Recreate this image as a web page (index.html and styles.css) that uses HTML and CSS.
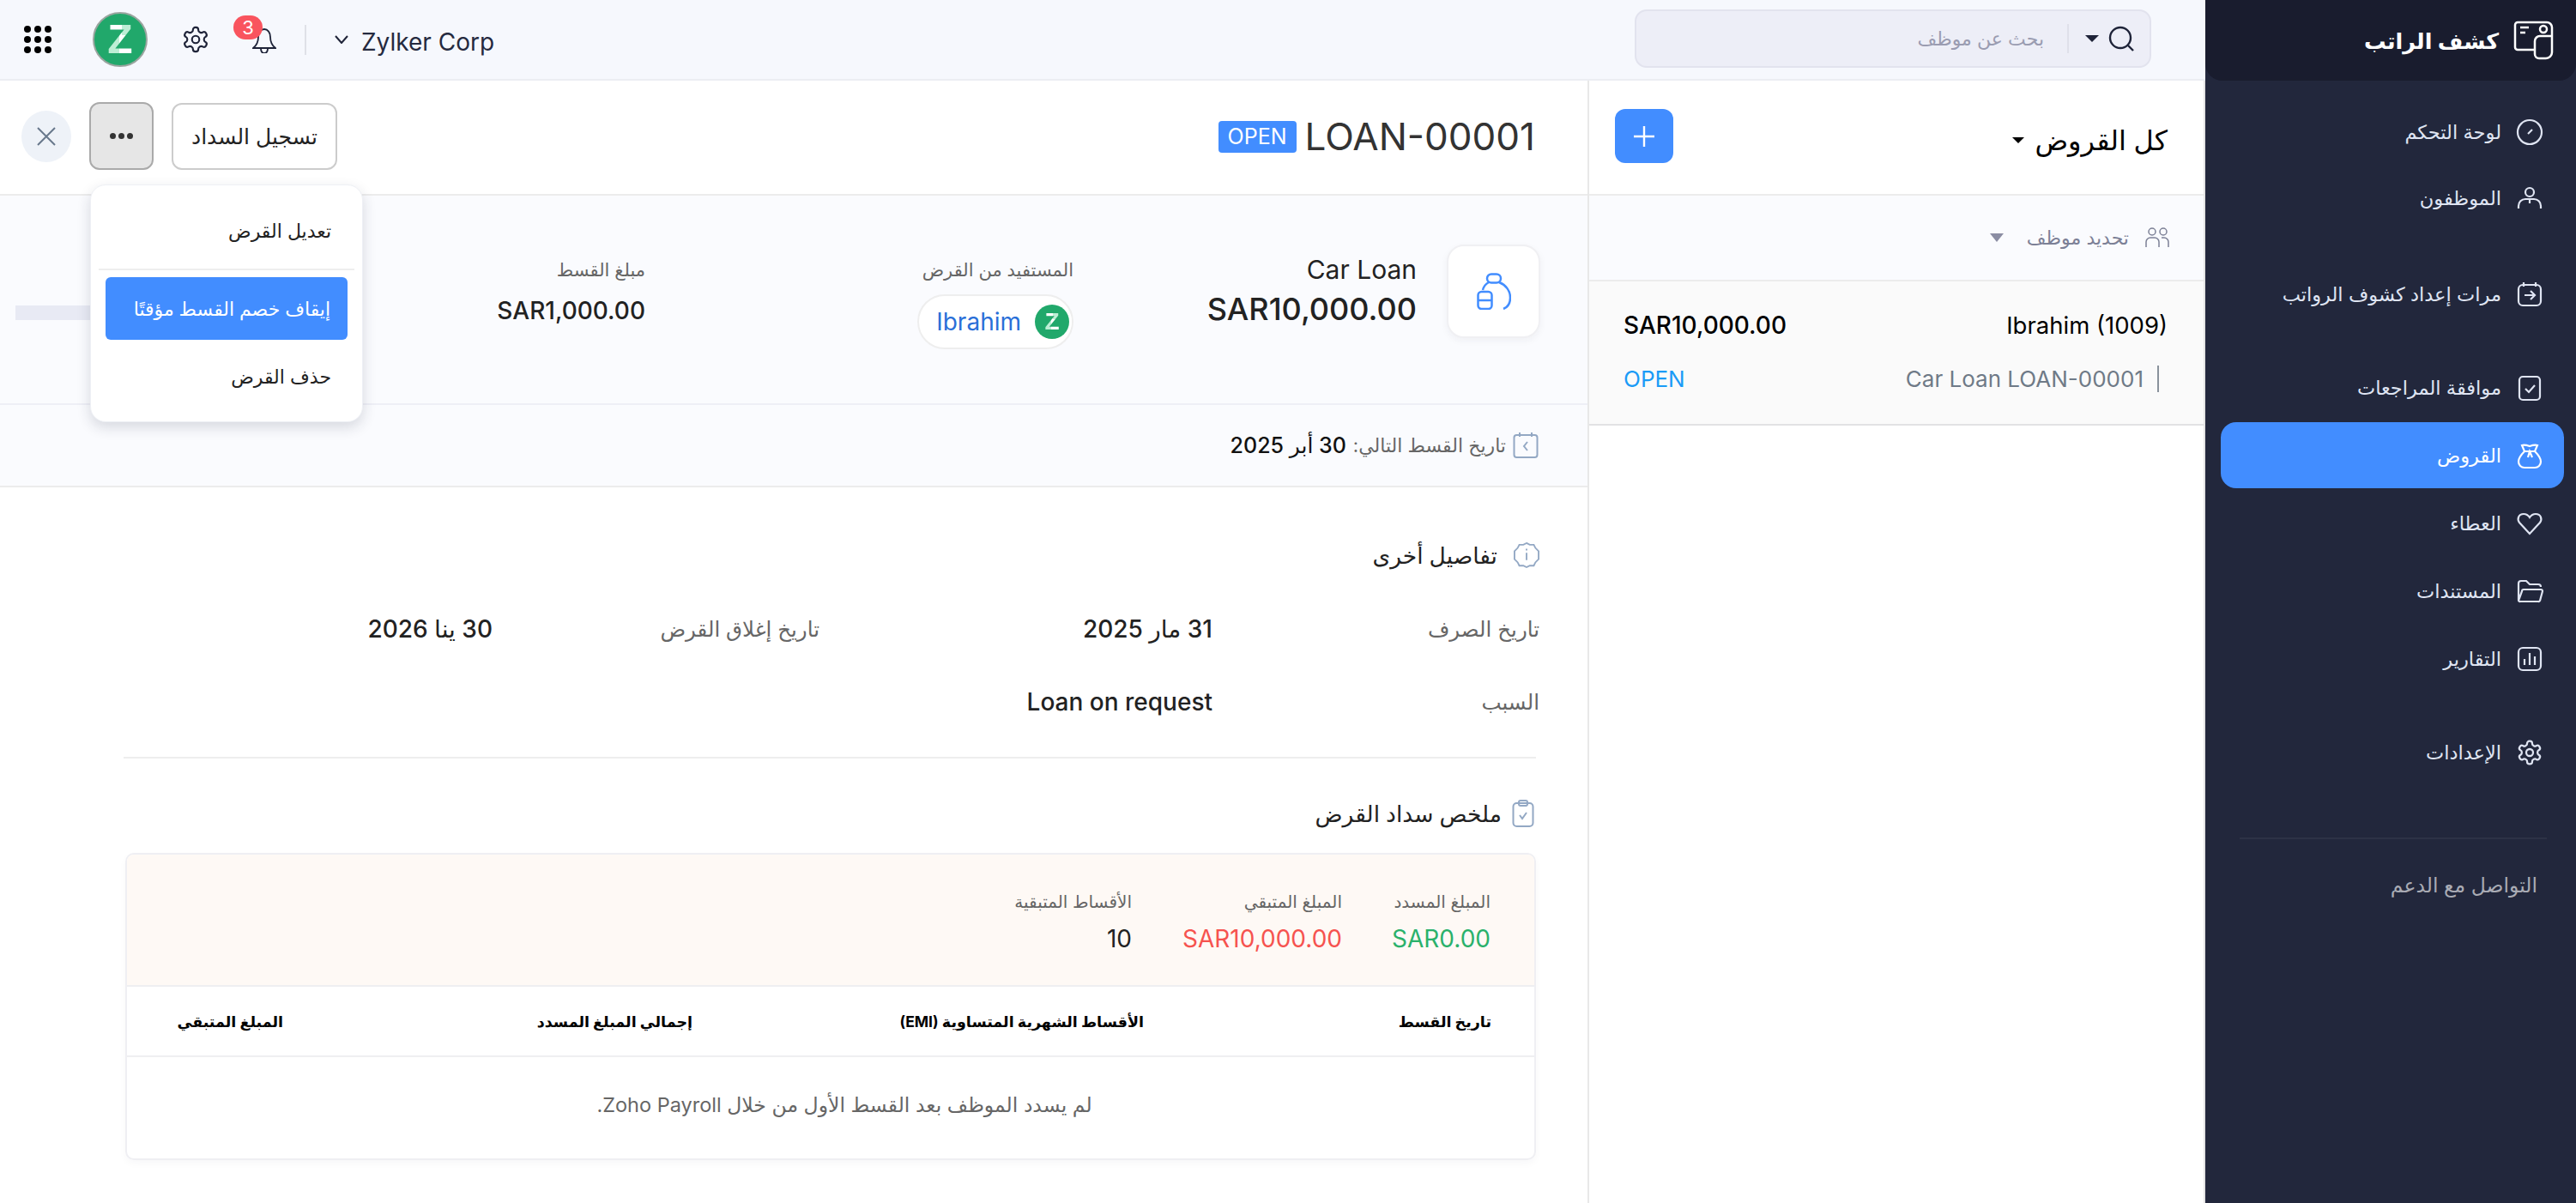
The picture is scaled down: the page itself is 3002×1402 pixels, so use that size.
FILE: index.html
```html
<!DOCTYPE html>
<html lang="ar" dir="rtl">
<head>
<meta charset="utf-8">
<title>كشف الراتب</title>
<link rel="stylesheet" href="styles.css">
</head>
<body>
<div class="app">
  <aside class="sidebar">
    <div class="brand">
      <svg class="brand-icon" viewBox="0 0 48 48"><path d="M25 35H6a3 3 0 0 1-3-3V6a3 3 0 0 1 3-3h34a6 6 0 0 1 6 6v29a7 7 0 0 1-7 7h-8a5 5 0 0 1-5-5V25a6 6 0 0 1 6-6h14"/><circle cx="36" cy="11" r="4"/><path d="M9 9h10M9 15h6"/></svg>
      <span class="brand-name">كشف الراتب</span>
    </div>
    <nav class="nav">
      <div class="nav-group">
        <a class="nav-item"><svg class="nav-icon" viewBox="0 0 32 32"><circle cx="16" cy="16" r="14"/><path d="M14 18l5-5"/></svg><span>لوحة التحكم</span></a>
        <a class="nav-item"><svg class="nav-icon" viewBox="0 0 32 32"><circle cx="16" cy="9" r="5"/><path d="M3 28v-3a8 8 0 0 1 8-8h10a8 8 0 0 1 8 8v3M16 17v5"/></svg><span>الموظفون</span></a>
      </div>
      <div class="nav-group nav-group-gap35">
        <a class="nav-item"><svg class="nav-icon" viewBox="0 0 32 32"><rect x="3" y="5" width="26" height="24" rx="5"/><path d="M9 2v5M23 2v5M10 17h12M17 12l5 5-5 5"/></svg><span>مرات إعداد كشوف الرواتب</span></a>
      </div>
      <div class="nav-group nav-group-gap32 nav-group-tight">
        <a class="nav-item"><svg class="nav-icon" viewBox="0 0 32 32"><rect x="4" y="3" width="24" height="27" rx="4"/><path d="M11 17l4 4 7-8"/></svg><span>موافقة المراجعات</span></a>
        <a class="nav-item nav-item-active"><svg class="nav-icon" viewBox="0 0 32 32"><path d="M10 11C6 15 3 19 3 23c0 4 3 7 7 7h12c4 0 7-3 7-7 0-4-3-8-7-12M10 11L7 4c3-1 6 0 9 1 3-1 6-2 9-1l-3 7zM14 18l2-7 3 7"/></svg><span>القروض</span></a>
        <a class="nav-item"><svg class="nav-icon" viewBox="0 0 32 32"><path d="M16 28L4 15C1 11 3 5 9 5c3 0 5 1 7 4 2-3 4-4 7-4 6 0 8 6 5 10z"/></svg><span>العطاء</span></a>
        <a class="nav-item"><svg class="nav-icon" viewBox="0 0 32 32"><path d="M3 26V7a3 3 0 0 1 3-3h6l4 4h10a3 3 0 0 1 3 3M3 27a2 2 0 0 0 2 1h21a2 2 0 0 0 2-1l3-11a2 2 0 0 0-2-2H9a2 2 0 0 0-2 2L3 27z"/></svg><span>المستندات</span></a>
        <a class="nav-item"><svg class="nav-icon" viewBox="0 0 32 32"><rect x="3" y="3" width="26" height="26" rx="5"/><path d="M10 23v-7M16 23V9M22 23V13"/></svg><span>التقارير</span></a>
      </div>
      <div class="nav-group nav-group-gap32">
        <a class="nav-item"><svg class="nav-icon" viewBox="0 0 24 24"><path class="thin" d="M12.22 2h-.44a2 2 0 0 0-2 2v.18a2 2 0 0 1-1 1.73l-.43.25a2 2 0 0 1-2 0l-.15-.08a2 2 0 0 0-2.73.73l-.22.38a2 2 0 0 0 .73 2.73l.15.1a2 2 0 0 1 1 1.72v.51a2 2 0 0 1-1 1.74l-.15.09a2 2 0 0 0-.73 2.73l.22.38a2 2 0 0 0 2.73.73l.15-.08a2 2 0 0 1 2 0l.43.25a2 2 0 0 1 1 1.73V20a2 2 0 0 0 2 2h.44a2 2 0 0 0 2-2v-.18a2 2 0 0 1 1-1.73l.43-.25a2 2 0 0 1 2 0l.15.08a2 2 0 0 0 2.73-.73l.22-.39a2 2 0 0 0-.73-2.73l-.15-.08a2 2 0 0 1-1-1.74v-.5a2 2 0 0 1 1-1.74l.15-.09a2 2 0 0 0 .73-2.73l-.22-.38a2 2 0 0 0-2.73-.73l-.15.08a2 2 0 0 1-2 0l-.43-.25a2 2 0 0 1-1-1.73V4a2 2 0 0 0-2-2z"/><circle class="thin" cx="12" cy="12" r="3"/></svg><span>الإعدادات</span></a>
      </div>
      <div class="nav-sep"></div>
      <a class="nav-support">التواصل مع الدعم</a>
    </nav>
  </aside>

  <div class="main">
    <header class="topbar">
      <div class="search">
        <svg class="search-icon" viewBox="0 0 30 30"><circle cx="14" cy="14" r="12"/><path d="M23 23l6 6"/></svg>
        <span class="caret caret-dark"></span>
        <span class="search-sep"></span>
        <span class="search-text">بحث عن موظف</span>
      </div>
      <div class="top-tools">
        <span class="org">Zylker Corp</span>
        <svg class="org-chev" viewBox="0 0 16 10"><path d="M1 1l7 8 7-8"/></svg>
        <span class="top-sep"></span>
        <div class="bell">
          <svg viewBox="0 0 28 32"><path d="M1 26c4-3 6-6 6-13 0-5 3-9 7-9s7 4 7 9c0 7 2 10 6 13zM10 26c0 8 8 8 8 0"/></svg>
          <b class="badge">3</b>
        </div>
        <svg class="gear" viewBox="0 0 24 24"><path d="M12.22 2h-.44a2 2 0 0 0-2 2v.18a2 2 0 0 1-1 1.73l-.43.25a2 2 0 0 1-2 0l-.15-.08a2 2 0 0 0-2.73.73l-.22.38a2 2 0 0 0 .73 2.73l.15.1a2 2 0 0 1 1 1.72v.51a2 2 0 0 1-1 1.74l-.15.09a2 2 0 0 0-.73 2.73l.22.38a2 2 0 0 0 2.73.73l.15-.08a2 2 0 0 1 2 0l.43.25a2 2 0 0 1 1 1.73V20a2 2 0 0 0 2 2h.44a2 2 0 0 0 2-2v-.18a2 2 0 0 1 1-1.73l.43-.25a2 2 0 0 1 2 0l.15.08a2 2 0 0 0 2.73-.73l.22-.39a2 2 0 0 0-.73-2.73l-.15-.08a2 2 0 0 1-1-1.74v-.5a2 2 0 0 1 1-1.74l.15-.09a2 2 0 0 0 .73-2.73l-.22-.38a2 2 0 0 0-2.73-.73l-.15.08a2 2 0 0 1-2 0l-.43-.25a2 2 0 0 1-1-1.73V4a2 2 0 0 0-2-2z"/><circle cx="12" cy="12" r="3"/></svg>
        <span class="zavatar zavatar-lg"><span class="zletter">Z</span></span>
        <svg class="apps" viewBox="0 0 32 32"><circle cx="4" cy="4" r="4"/><circle cx="16" cy="4" r="4"/><circle cx="28" cy="4" r="4"/><circle cx="4" cy="16" r="4"/><circle cx="16" cy="16" r="4"/><circle cx="28" cy="16" r="4"/><circle cx="4" cy="28" r="4"/><circle cx="16" cy="28" r="4"/><circle cx="28" cy="28" r="4"/></svg>
      </div>
    </header>

    <div class="content">
      <section class="list">
        <div class="list-head">
          <div class="list-title"><h2>كل القروض</h2><span class="caret caret-black"></span></div>
          <button class="add"><svg viewBox="0 0 24 24"><path d="M12 0v24M0 12h24"/></svg></button>
        </div>
        <div class="list-filter">
          <svg class="people" viewBox="0 0 28 24"><circle cx="8" cy="5" r="4"/><circle cx="21" cy="5" r="4"/><path d="M1 23v-6a5 5 0 0 1 5-5h5a5 5 0 0 1 5 5v6M19 12h3a5 5 0 0 1 5 5v6"/></svg>
          <span>تحديد موظف</span>
          <span class="caret caret-gray"></span>
        </div>
        <article class="loan-row">
          <div class="loan-line">
            <span class="loan-name">Ibrahim (1009)</span>
            <span class="loan-amount">SAR10,000.00</span>
          </div>
          <div class="loan-line loan-line-sub">
            <span class="loan-meta"><i class="pipe"></i><bdi>Car Loan LOAN-00001</bdi></span>
            <span class="loan-status">OPEN</span>
          </div>
        </article>
      </section>

      <section class="detail">
        <div class="detail-head">
          <div class="detail-title"><h1>LOAN-00001</h1><span class="tag">OPEN</span></div>
          <div class="actions">
            <button class="btn">تسجيل السداد</button>
            <button class="btn-more"><i></i><i></i><i></i></button>
            <button class="btn-close"><svg viewBox="0 0 22 22"><path d="M1 1l20 20M21 1L1 21"/></svg></button>
          </div>
          <div class="menu">
            <div class="menu-item">تعديل القرض</div>
            <div class="menu-sep"></div>
            <div class="menu-item menu-item-active">إيقاف خصم القسط مؤقتًا</div>
            <div class="menu-item">حذف القرض</div>
          </div>
        </div>

        <div class="overview">
          <div class="ov-cell ov-main">
            <div class="ov-icon"><svg viewBox="0 0 40 43"><rect x="12" y="1.500" width="16" height="10" rx="5"/><path d="M14 11c-4 2-6 5-7 9M26 11c8 3 13 10 13 18 0 6-3 11-8 13"/><rect x="1.500" y="22" width="16" height="20" rx="4"/><path d="M1.500 32h16"/></svg></div>
            <div class="ov-name"><div class="ov-type">Car Loan</div><div class="ov-value ov-value-lg">SAR10,000.00</div></div>
          </div>
          <div class="ov-cell ov-stack">
            <div class="label">المستفيد من القرض</div>
            <div class="pill"><span class="zavatar zavatar-sm"><span class="zletter">Z</span></span><span class="pill-name">Ibrahim</span></div>
          </div>
          <div class="ov-cell ov-last">
            <div class="ov-stack">
              <div class="label">مبلغ القسط</div>
              <div class="ov-value"><bdi>SAR1,000.00</bdi></div>
            </div>
            <div class="skeleton"></div>
          </div>
        </div>

        <div class="next">
          <svg class="sec-icon" viewBox="0 0 30 32"><rect x="1.500" y="4" width="27" height="26" rx="3"/><path d="M8 1v5M22 1v5M17 12l-4 5 4 5"/></svg>
          <span class="next-label">تاريخ القسط التالي:</span>
          <span class="next-date">30 أبر 2025</span>
        </div>

        <div class="body">
          <h3 class="sec-title sec-first">
            <svg class="sec-icon" viewBox="0 0 32 32"><path d="M16 1l4 2 5 0 2 4 4 4v10l-4 4-2 4-5 0-4 2-4-2-5 0-2-4-4-4V11l4-4 2-4 5 0z"/><path d="M16 13v9M16 8v2"/></svg>
            <span>تفاصيل أخرى</span>
          </h3>
          <dl class="facts">
            <dt>تاريخ الصرف</dt><dd>31 مار 2025</dd>
            <dt>تاريخ إغلاق القرض</dt><dd>30 ينا 2026</dd>
            <dt>السبب</dt><dd>Loan on request</dd>
          </dl>
          <div class="rule"></div>
          <h3 class="sec-title sec-second">
            <svg class="sec-icon sec-icon-clip" viewBox="0 0 26 32"><rect x="1.500" y="4" width="23" height="27" rx="4"/><rect x="8" y="1" width="10" height="6" rx="2"/><path d="M9 18l3 4 5-7"/></svg>
            <span>ملخص سداد القرض</span>
          </h3>
          <div class="card">
            <div class="totals">
              <div class="total"><div class="label">المبلغ المسدد</div><div class="total-value green"><bdi>SAR0.00</bdi></div></div>
              <div class="total"><div class="label">المبلغ المتبقي</div><div class="total-value red"><bdi>SAR10,000.00</bdi></div></div>
              <div class="total"><div class="label">الأقساط المتبقية</div><div class="total-value">10</div></div>
            </div>
            <div class="thead">
              <span>تاريخ القسط</span>
              <span>الأقساط الشهرية المتساوية (EMI)</span>
              <span>إجمالي المبلغ المسدد</span>
              <span>المبلغ المتبقي</span>
            </div>
            <div class="empty">لم يسدد الموظف بعد القسط الأول من خلال Zoho Payroll.</div>
          </div>
        </div>
      </section>
    </div>
  </div>
</div>
</body>
</html>
```
FILE: styles.css
```css
* { box-sizing: border-box; }
html, body { margin: 0; padding: 0; }
body {
  width: 3002px;
  height: 1402px;
  overflow: hidden;
  background: #fff;
  font-family: Inter, "DejaVu Sans", sans-serif;
  font-size: 24px;
  color: #1f2430;
}
h1, h2, h3, dl, dd { margin: 0; font-weight: 400; }
button { font: inherit; padding: 0; cursor: pointer; }
svg { display: block; flex: none; fill: none; stroke: currentColor; }

.app { display: flex; height: 1402px; }

/* Sidebar */
.sidebar { width: 432px; flex: none; background: #22273c; color: #dfe4f2; }
.brand {
  height: 94px;
  background: #191c2e;
  border-radius: 0 0 20px 20px;
  display: flex;
  align-items: center;
  gap: 16px;
  padding-right: 26px;
  color: #fff;
}
.brand-icon { width: 48px; height: 48px; stroke-width: 2.5; }
.brand-name { font-size: 25.500px; font-weight: 600; }
.nav { padding-top: 21px; }
.nav-group { display: flex; flex-direction: column; }
.nav-group-gap35 { margin-top: 35px; }
.nav-group-gap32 { margin-top: 32px; }
.nav-group-tight { gap: 2px; }
.nav-item {
  height: 77px;
  margin: 0 14px 0 18px;
  display: flex;
  align-items: center;
  gap: 17px;
  padding-right: 24px;
  border-radius: 18px;
  font-size: 22.5px;
}
.nav-item-active { background: #428dff; color: #fff; }
.nav-icon { width: 32px; height: 32px; stroke-width: 2.2; }
.nav-icon .thin { stroke-width: 1.7; }
.nav-sep { height: 2px; background: #2d3246; margin: 61px 34px 0 40px; }
.nav-support {
  display: block;
  margin: 36px 45px 0 0;
  font-size: 23.500px;
  color: #a9abb4;
  line-height: 36px;
}

/* Main */
.main { width: 2570px; flex: none; display: flex; flex-direction: column; }
.topbar {
  height: 94px;
  flex: none;
  background: #f6f8fd;
  border-bottom: 2px solid #eceef3;
  display: flex;
  align-items: center;
  justify-content: space-between;
  padding: 0 63px 0 28px;
}
.search {
  width: 602px;
  height: 68px;
  margin-top: -3px;
  background: #edeef7;
  border: 2px solid #e2e3ee;
  border-radius: 14px;
  display: flex;
  align-items: center;
  padding-right: 18px;
  color: #1e2338;
}
.search-icon { width: 30px; height: 30px; stroke-width: 2.4; }
.caret { width: 0; height: 0; border-style: solid; border-color: transparent; border-bottom-width: 0; display: block; flex: none; }
.caret-dark { border-width: 8px 8px 0; border-top-color: #1e2338; margin: 0 11px 0 0; }
.search-sep { width: 2px; height: 34px; background: #dfe0ea; margin-right: 19px; }
.search-text { margin-right: 27px; font-size: 22px; color: #9a9cb1; }

.top-tools { display: flex; align-items: center; color: #1e2338; }
.org { font-size: 28px; color: #252a3f; direction: ltr; margin-top: 6px; }
.org-chev { width: 16px; height: 10px; stroke-width: 2; margin-right: 15px; }
.top-sep { width: 2px; height: 35px; background: #dfe1e8; margin-right: 33px; }
.bell { position: relative; width: 28px; height: 32px; margin-right: 33px; }
.bell svg { width: 28px; height: 32px; stroke-width: 1.8; }
.badge {
  position: absolute;
  top: -12px;
  right: 16px;
  width: 34px;
  height: 28px;
  border-radius: 14px;
  background: #f9545e;
  color: #fff;
  font-size: 22px;
  font-weight: 400;
  line-height: 28px;
  text-align: center;
}
.gear { width: 34px; height: 34px; stroke-width: 1.5; margin-right: 49px; }
.zavatar {
  display: flex;
  align-items: center;
  justify-content: center;
  flex: none;
  border-radius: 50%;
  background-color: #21a86b;
  font-family: "Liberation Sans", sans-serif;
  font-weight: 700;
}
.zletter {
  display: block;
  line-height: 1;
  color: transparent;
  background:
    linear-gradient(to right, #fff 58%, #bdeed5 58%) top / 100% 40% no-repeat,
    linear-gradient(to right, #bdeed5 48%, #fff 48%) bottom / 100% 60% no-repeat;
  -webkit-background-clip: text;
  background-clip: text;
}
.zavatar-lg { width: 64px; height: 64px; font-size: 48px; border: 2px solid #9aa59f; margin-right: 39px; }
.zavatar-sm { width: 40px; height: 40px; font-size: 28px; box-shadow: 0 0 0 3px #fff; margin-right: 2px; }
.apps { width: 32px; height: 32px; fill: #000; stroke: none; margin-right: 48px; }

.content { flex: 1; display: flex; min-height: 0; }

/* List */
.list { width: 720px; flex: none; border-left: 2px solid #e8e8e8; border-right: 2px solid #e4e4e4; }
.list-head {
  height: 134px;
  border-bottom: 2px solid #ececec;
  display: flex;
  align-items: center;
  justify-content: space-between;
  padding: 0 42px 0 30px;
}
.list-title { display: flex; align-items: center; gap: 12px; margin-top: 6px; }
.list-title h2 { font-size: 32px; font-weight: 500; color: #000; }
.caret-black { border-width: 7px 7px 0; border-top-color: #000; }
.add { width: 68px; height: 63px; border: 0; border-radius: 12px; background: #428dff; display: flex; align-items: center; justify-content: center; color: #fff; margin-top: -3px; }
.add svg { width: 24px; height: 24px; stroke-width: 2.4; }
.list-filter {
  height: 100px;
  background: #fafbfe;
  border-bottom: 2px solid #ececec;
  display: flex;
  align-items: center;
  padding-right: 40px;
  color: #7c8096;
  font-size: 22px;
}
.people { width: 28px; height: 24px; stroke-width: 1.5; margin-left: 19px; }
.caret-gray { border-width: 10px 8px 0; border-top-color: #8b8da3; margin-right: 27px; }
.loan-row {
  height: 168px;
  background: #fafafa;
  border-bottom: 2px solid #e2e2e4;
  padding: 20px 42px 0 40px;
}
.loan-line { display: flex; justify-content: space-between; align-items: center; height: 62px; font-size: 28px; color: #000; }
.loan-amount { font-weight: 500; }
.loan-name { direction: ltr; unicode-bidi: isolate; font-size: 27.500px; }
.loan-line-sub { font-size: 26px; }
.loan-meta { display: flex; align-items: center; gap: 16px; color: #6f7a87; margin-right: 10px; }
.pipe { width: 2px; height: 31px; background: #8a929c; display: block; }
.loan-status { color: #1a9bf7; }

/* Detail */
.detail { flex: 1; min-width: 0; display: flex; flex-direction: column; }
.detail-head {
  position: relative;
  height: 134px;
  flex: none;
  border-bottom: 2px solid #ececec;
  display: flex;
  align-items: center;
  justify-content: space-between;
  padding: 0 61px 0 25px;
}
.detail-title { display: flex; align-items: center; gap: 10px; margin-top: -2px; }
.detail-title h1 { font-size: 44px; color: #333; direction: ltr; }
.tag { background: #428dff; color: #fff; font-size: 25px; height: 37px; line-height: 37px; padding: 0 11px; border-radius: 4px; }
.actions { display: flex; align-items: center; gap: 21px; margin-top: -3px; }
.btn { width: 193px; height: 78px; background: #fff; border: 2px solid #ccc; border-radius: 12px; font-size: 25px; color: #222; }
.btn-more { width: 75px; height: 79px; background: #e6e6e6; border: 2px solid #aaa; border-radius: 12px; display: flex; align-items: center; justify-content: center; gap: 3px; }
.btn-more i { width: 7px; height: 7px; border-radius: 50%; background: #333; display: block; }
.btn-close { width: 58px; height: 60px; border: 0; border-radius: 50%; background: #eef2f8; color: #68788c; display: flex; align-items: center; justify-content: center; }
.btn-close svg { width: 22px; height: 22px; stroke-width: 2; }

.menu {
  position: absolute;
  left: 105px;
  top: 121px;
  z-index: 5;
  width: 318px;
  height: 277px;
  background: #fff;
  border: 1px solid #eef0f5;
  border-radius: 18px;
  box-shadow: 0 6px 16px rgba(30, 35, 60, .16);
  padding: 16px 9px;
  font-size: 22px;
  color: #222;
}
.menu-item { height: 73px; display: flex; align-items: center; padding-right: 19px; margin: 0 8px; border-radius: 6px; }
.menu-sep { height: 2px; background: #eeeeee; margin: 8px 0; }
.menu-item-active { background: #428dff; color: #fff; font-weight: 500; padding-right: 20px; margin-bottom: 6px; }

.overview {
  height: 244px;
  flex: none;
  background: #fafbfe;
  border-bottom: 2px solid #eeeff6;
  padding: 57px 55px 0 0;
  display: grid;
  grid-template-columns: 544px 499px 1fr;
}
.ov-cell { display: flex; min-width: 0; }
.ov-main { gap: 35px; }
.ov-icon { width: 109px; height: 109px; background: #fff; border: 2px solid #f0f0f3; border-radius: 20px; box-shadow: 0 3px 8px rgba(30, 35, 60, .05); display: flex; align-items: center; justify-content: center; color: #428dff; }
.ov-icon svg { width: 40px; height: 43px; stroke-width: 2.5; }
.ov-type { font-size: 30px; line-height: 36px; margin-top: 11px; color: #222; }
.ov-value { font-size: 28px; font-weight: 500; color: #222; line-height: 40px; }
.ov-value-lg { font-size: 36px; line-height: 44px; margin-top: 6px; direction: ltr; }
.ov-stack { display: flex; flex-direction: column; }
.label { font-size: 20px; color: #666; line-height: 30px; }
.ov-stack > .label { margin-top: 15px; font-size: 21px; }
.pill { margin-top: 13px; height: 64px; align-self: flex-start; display: flex; align-items: center; gap: 16px; background: #fff; border: 2px solid #eeeeee; border-radius: 32px; padding: 0 1px 0 20px; color: #2a6fd8; font-size: 28px; }
.ov-last { justify-content: space-between; }
.ov-last .ov-value { margin-top: 12px; }
.skeleton { width: 200px; height: 17px; margin: 71px 0 0 18px; background: #e8eaf4; }

.next {
  height: 96px;
  flex: none;
  background: #fafbfe;
  border-bottom: 2px solid #ececec;
  display: flex;
  align-items: center;
  gap: 8px;
  padding: 0 57px 0 0;
  font-size: 22px;
  color: #666;
}
.sec-icon { width: 30px; height: 32px; color: #93a8c4; stroke-width: 2; }
.next-date { font-size: 25px; font-weight: 500; color: #111; }

.body { flex: 1; padding: 0 56px 0 60px; }
.sec-title { display: flex; align-items: center; font-size: 26.500px; color: #222; font-weight: 500; }
.sec-first { margin-top: 63px; gap: 19px; }
.sec-second { margin-top: 48px; gap: 12px; }
.sec-icon-clip { width: 26px; margin-right: 6px; }

.facts {
  margin-top: 27px;
  display: grid;
  grid-template-columns: 381px 458px 381px 1fr;
  grid-auto-rows: 85px;
  align-items: center;
}
.facts dt { font-size: 24.500px; color: #666; }
.facts dd { font-size: 28px; font-weight: 500; color: #222; }
.facts dd:nth-of-type(3) { direction: ltr; text-align: right; }
.rule { height: 2px; background: #eeeeee; margin: 22px 4px 0 84px; }

.card {
  margin: 30px 4px 0 86px;
  border: 2px solid #efeff3;
  border-radius: 10px;
  box-shadow: 0 4px 10px rgba(30, 35, 60, .03);
  overflow: hidden;
}
.totals { height: 154px; background: #fef9f5; border-bottom: 2px solid #efeff1; display: grid; grid-template-columns: 173px 245px 1fr; padding: 38px 51px 0 0; }
.total .label { line-height: 34px; }
.total-value { font-size: 28px; line-height: 44px; margin-top: 4px; color: #222; }
.green { color: #2ab16b; }
.red { color: #f6534f; }
.thead { height: 82px; border-bottom: 2px solid #efeff1; display: grid; grid-template-columns: 405px 526px 477px 1fr; align-items: center; padding-right: 50px; font-size: 17.500px; font-weight: 700; color: #000; }
.empty { height: 118px; display: flex; align-items: center; justify-content: center; padding: 0 0 8px 32px; font-size: 23.500px; color: #666; }
```
